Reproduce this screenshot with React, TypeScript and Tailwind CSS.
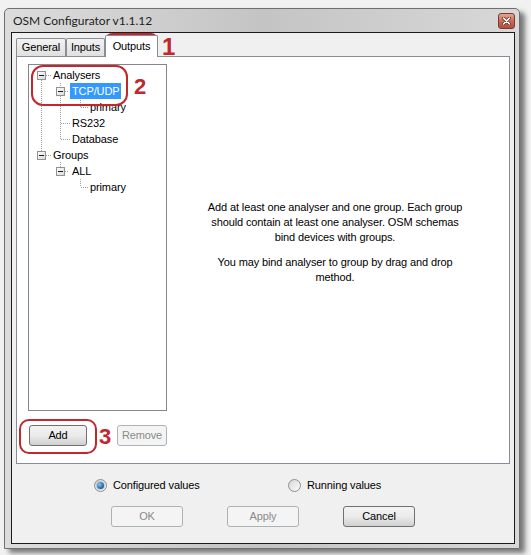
import React from 'react'

const RED = '#c1272d'

function WinButton({ label, disabled, w }: { label: string; disabled?: boolean; w: string }) {
  return (
    <div
      className={
        'h-[21px] flex items-center justify-center rounded-[3px] border text-[11px] ' +
        w +
        (disabled
          ? ' border-[#adb2b5] bg-[#f4f4f4] text-[#8a8a8a]'
          : ' border-[#707070] bg-gradient-to-b from-[#f3f3f3] via-[#ebebeb] to-[#d0d0d0] text-black')
      }
    >
      {label}
    </div>
  )
}

function Radio({ checked, label }: { checked?: boolean; label: string }) {
  return (
    <div className="flex items-center gap-[6px] h-[13px]">
      <div className="w-[13px] h-[13px] rounded-full border border-[#8e8f8f] bg-gradient-to-br from-[#d8d8d8] to-[#fbfbfb] flex items-center justify-center">
        {checked && (
          <div className="w-[7px] h-[7px] rounded-full bg-[radial-gradient(circle_at_35%_35%,#8fc4ea,#1f5d93_70%)] shadow-[0_0_2px_#3b7cb8]" />
        )}
      </div>
      <span className="text-[11px] text-black leading-none">{label}</span>
    </div>
  )
}

function Tab({ label, selected, w }: { label: string; selected?: boolean; w: string }) {
  if (selected) {
    return (
      <div className={'relative z-10 -mb-px h-[22px] border border-b-0 border-[#898c95] bg-white rounded-t-[2px] flex items-center justify-center text-[11px] ' + w}>
        {label}
      </div>
    )
  }
  return (
    <div className={'h-[18px] border border-b-0 border-[#898c95] bg-gradient-to-b from-[#f2f2f2] to-[#e0e0e0] rounded-t-[2px] flex items-center justify-center text-[11px] ' + w}>
      {label}
    </div>
  )
}

const rows: { label: string; level: number; selected?: boolean }[] = [
  { label: 'Analysers', level: 0 },
  { label: 'TCP/UDP', level: 1, selected: true },
  { label: 'primary', level: 2 },
  { label: 'RS232', level: 1 },
  { label: 'Database', level: 1 },
  { label: 'Groups', level: 0 },
  { label: 'ALL', level: 1 },
  { label: 'primary', level: 2 },
]

const indent = ['pl-[22px]', 'pl-[41px]', 'pl-[59px]']

function Expander({ x, y }: { x: number; y: number }) {
  return (
    <g>
      <rect x={x + 0.5} y={y + 0.5} width={8} height={8} fill="url(#exp)" stroke="#919191" />
      <line x1={x + 2} y1={y + 4.5} x2={x + 7} y2={y + 4.5} stroke="#1b1b1b" />
    </g>
  )
}

function TreeLines() {
  const dot = { stroke: '#a0a0a0', strokeDasharray: '1 1', shapeRendering: 'crispEdges' as const }
  return (
    <svg className="absolute inset-0 pointer-events-none" width="137" height="345">
      <defs>
        <linearGradient id="exp" x1="0" y1="0" x2="1" y2="1">
          <stop offset="0" stopColor="#ffffff" />
          <stop offset="1" stopColor="#d6d6d6" />
        </linearGradient>
      </defs>
      {/* root line */}
      <line x1={12.5} y1={15} x2={12.5} y2={86} {...dot} />
      <line x1={17} y1={10.5} x2={23} y2={10.5} {...dot} />
      <line x1={17} y1={90.5} x2={23} y2={90.5} {...dot} />
      {/* analysers children */}
      <line x1={31.5} y1={18} x2={31.5} y2={22} {...dot} />
      <line x1={31.5} y1={31} x2={31.5} y2={75} {...dot} />
      <line x1={36} y1={26.5} x2={40} y2={26.5} {...dot} />
      <line x1={32} y1={58.5} x2={42} y2={58.5} {...dot} />
      <line x1={32} y1={74.5} x2={42} y2={74.5} {...dot} />
      <line x1={51.5} y1={35} x2={51.5} y2={42} {...dot} />
      <line x1={52} y1={42.5} x2={60} y2={42.5} {...dot} />
      {/* groups children */}
      <line x1={31.5} y1={97} x2={31.5} y2={102} {...dot} />
      <line x1={36} y1={106.5} x2={40} y2={106.5} {...dot} />
      <line x1={51.5} y1={114} x2={51.5} y2={122} {...dot} />
      <line x1={52} y1={122.5} x2={60} y2={122.5} {...dot} />
      <Expander x={8} y={6} />
      <Expander x={8} y={86} />
      <Expander x={27} y={22} />
      <Expander x={27} y={102} />
    </svg>
  )
}

export default function App() {
  return (
    <div
      className="relative w-[531px] h-[555px] overflow-hidden bg-[#f1f1f1] pl-[4px] pt-[8px] tracking-[-0.12px]"
      style={{ fontFamily: '"Liberation Sans", Arial, sans-serif' }}
    >
      {/* window */}
      <div className="w-[516px] h-[541px] border border-[#6f6f6f] rounded-t-[5px] bg-gradient-to-r from-[#dcdcdc] via-[#c4c4c4] to-[#d8d8d8] shadow-[5px_4px_5px_rgba(0,0,0,0.5)] flex flex-col pl-[6px] pr-[4px] pb-[4px]">
        {/* title bar */}
        <div className="h-[23px] flex items-center justify-between pl-[2px]">
          <span className="text-[12px] text-[#1e1e1e] tracking-normal" style={{ fontFamily: 'Lato, "Liberation Sans", sans-serif' }}>
            OSM Configurator v1.1.12
          </span>
          <div className="w-[17px] h-[16px] rounded-[3px] border border-[#7b3a31] bg-gradient-to-b from-[#e4a596] via-[#c86a57] to-[#b24e3c] flex items-center justify-center">
            <svg width="9" height="8" viewBox="0 0 9 8">
              <path d="M1.5 1 L7.5 7 M7.5 1 L1.5 7" stroke="#5a2a22" strokeWidth="3" strokeLinecap="round" />
              <path d="M1.5 1 L7.5 7 M7.5 1 L1.5 7" stroke="#ffffff" strokeWidth="1.6" strokeLinecap="round" />
            </svg>
          </div>
        </div>

        {/* client area */}
        <div className="flex-1 border border-[#1c1c1c] bg-[#f0f0f0] flex flex-col">
          {/* tab strip */}
          <div className="h-[23px] flex items-end pl-[4px]">
            <Tab label="General" w="w-[50px]" />
            <Tab label="Inputs" w="w-[39px]" />
            <Tab label="Outputs" w="w-[53px]" selected />
          </div>

          {/* tab page */}
          <div className="mx-[4px] h-[408px] border border-[#898c95] bg-white flex pl-[11px] pt-[7px]">
            <div className="w-[139px] flex flex-col">
              <div className="relative h-[347px] border border-[#828790] bg-white pt-[2px]">
                <TreeLines />
                {rows.map((r, i) => (
                  <div key={i} className={'h-[16px] flex items-center text-[11px] ' + indent[r.level]}>
                    {r.selected ? (
                      <span className="bg-[#3399ff] text-white px-[2px] h-[16px] leading-[16px]">{r.label}</span>
                    ) : (
                      <span className="px-[2px] text-black">{r.label}</span>
                    )}
                  </div>
                ))}
              </div>
              <div className="mt-[14px] flex gap-[30px] pl-[1px]">
                <WinButton label="Add" w="w-[58px]" />
                <WinButton label="Remove" w="w-[50px]" disabled />
              </div>
            </div>

            <div className="flex-1 pt-[136px] text-center text-[11px] leading-[15px] text-black pr-[6px]">
              <p>
                Add at least one analyser and one group. Each group
                <br />
                should contain at least one analyser. OSM schemas
                <br />
                bind devices with groups.
              </p>
              <p className="mt-[10px]">
                You may bind analyser to group by drag and drop
                <br />
                method.
              </p>
            </div>
          </div>

          {/* radios */}
          <div className="mt-[15px] flex pl-[82px]">
            <div className="w-[194px]">
              <Radio checked label="Configured values" />
            </div>
            <Radio label="Running values" />
          </div>

          {/* buttons */}
          <div className="mt-[14px] flex gap-[44px] pl-[99px]">
            <WinButton label="OK" w="w-[72px]" disabled />
            <WinButton label="Apply" w="w-[72px]" disabled />
            <WinButton label="Cancel" w="w-[72px]" />
          </div>
        </div>
      </div>

      {/* red annotations */}
      <div className="absolute left-[105px] top-[33px] w-[53px] h-[24px] rounded-[7px] border-[2.5px] border-[#c1272d]" />
      <span className="absolute left-[162px] top-[35px] text-[24px] font-bold leading-none tracking-normal" style={{ color: RED }}>1</span>
      <div className="absolute left-[31px] top-[65px] w-[97px] h-[41px] rounded-[12px] border-[2.5px] border-[#c1272d]" />
      <span className="absolute left-[134px] top-[76px] text-[22px] font-bold leading-none tracking-normal" style={{ color: RED }}>2</span>
      <div className="absolute left-[19px] top-[419px] w-[78px] h-[35px] rounded-[10px] border-[2.5px] border-[#c1272d]" />
      <span className="absolute left-[99px] top-[426px] text-[22px] font-bold leading-none tracking-normal" style={{ color: RED }}>3</span>
    </div>
  )
}
